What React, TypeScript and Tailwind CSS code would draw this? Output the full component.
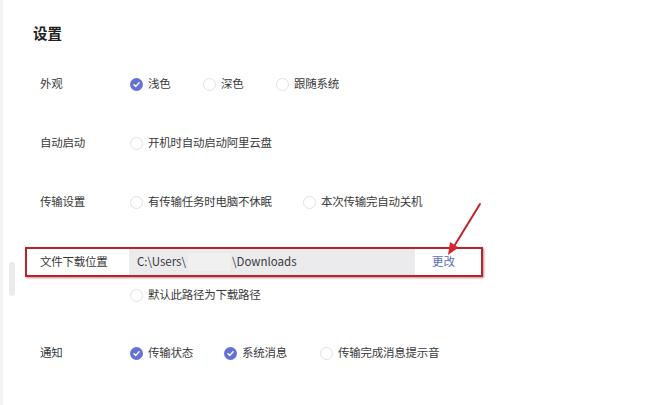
import React from 'react';

const font = { fontFamily: '"Noto Sans CJK SC", "Liberation Sans", sans-serif' };

const Radio = ({ checked }: { checked?: boolean }) =>
  checked ? (
    <span className="flex h-[13px] w-[13px] shrink-0 items-center justify-center rounded-full bg-[#6472d6]">
      <svg width="9" height="9" viewBox="0 0 10 10" fill="none">
        <path d="M2.2 5.2 4.2 7.1 7.9 3" stroke="#fff" strokeWidth="1.6" strokeLinecap="round" strokeLinejoin="round" />
      </svg>
    </span>
  ) : (
    <span className="h-[13px] w-[13px] shrink-0 rounded-full border-[1.5px] border-[#e2e2e2] bg-white" />
  );

interface OptionProps {
  label: string;
  checked?: boolean;
  className?: string;
}

const Option: React.FC<OptionProps> = ({ label, checked, className }) => (
  <div className={`flex items-center gap-[5px] ${className ?? ''}`}>
    <Radio checked={checked} />
    <span className="text-[11.5px] tracking-[-0.25px] text-[#3a3a3a]">{label}</span>
  </div>
);

const Row = ({ label, children, className }: { label: string; children: React.ReactNode; className?: string }) => (
  <div className={`flex h-[26px] items-center ${className ?? ''}`}>
    <div className="w-[90px] shrink-0 text-[11.5px] tracking-[-0.25px] text-[#3a3a3a]">{label}</div>
    {children}
  </div>
);

export default function App() {
  return (
    <div className="relative h-[405px] w-[650px] overflow-hidden border-l-[3px] border-[#f3f3f3] bg-white" style={font}>
      <div className="pl-[30px] pt-[24px] text-[14.5px] font-bold leading-[18px] text-[#222]">设置</div>

      <div className="mt-[29px] flex flex-col pl-[37px]">
        <Row label="外观">
          <Option label="浅色" checked className="w-[73px]" />
          <Option label="深色" className="w-[73px]" />
          <Option label="跟随系统" />
        </Row>
        <Row label="自动启动" className="mt-[33px]">
          <Option label="开机时自动启动阿里云盘" />
        </Row>
        <Row label="传输设置" className="mt-[33px]">
          <Option label="有传输任务时电脑不休眠" className="w-[173px]" />
          <Option label="本次传输完自动关机" />
        </Row>
        <div className="mt-[33px] flex h-[27px] items-center">
          <div className="w-[89px] shrink-0 text-[11.5px] tracking-[-0.25px] text-[#3a3a3a]">文件下载位置</div>
          <div className="flex h-full w-[286px] items-center bg-[#ebebed] pl-[8px] text-[11.5px] text-[#3a3a3a]">
            <span>C:\Users\</span>
            <span className="mx-[2px] h-[18px] w-[42px] bg-[#f0f0f1]" />
            <span>\Downloads</span>
          </div>
          <button className="ml-[17px] text-[11.5px] text-[#5a6cb4]">更改</button>
        </div>
        <Row label="" className="mt-[7px]">
          <Option label="默认此路径为下载路径" />
        </Row>
        <Row label="通知" className="mt-[32px]">
          <Option label="传输状态" checked className="w-[94px]" />
          <Option label="系统消息" checked className="w-[96px]" />
          <Option label="传输完成消息提示音" />
        </Row>
      </div>

      {/* scrollbar thumb */}
      <div className="absolute left-[6px] top-[262px] h-[34px] w-[6px] rounded-full bg-[#ebebeb]" />

      {/* red annotation box */}
      <div className="absolute left-[22px] top-[247px] h-[30px] w-[458px] border-2 border-[#b8242d] shadow-[1px_1px_2px_rgba(120,0,0,0.45)]" />

      {/* red arrow */}
      <svg className="absolute left-[436px] top-[198px]" width="50" height="62" viewBox="0 0 50 62">
        <line x1="41" y1="6" x2="14" y2="50" stroke="#c0222b" strokeWidth="2" strokeLinecap="round" />
        <path d="M9 57 L11 44 L19.5 49.5 Z" fill="#d42530" />
      </svg>
    </div>
  );
}
